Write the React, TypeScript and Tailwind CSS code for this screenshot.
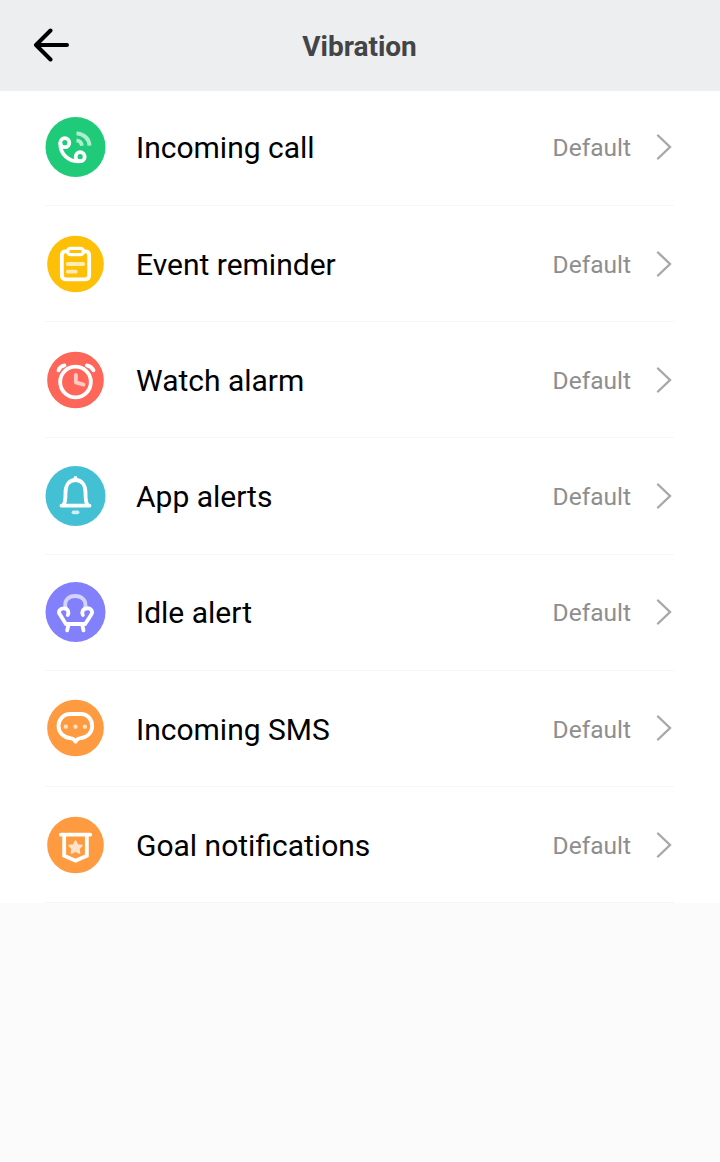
import React from 'react';

interface VibrationItem {
  label: string;
  value: string;
  color: string;
  radius: number;
  icon: React.ReactNode;
}

const items: VibrationItem[] = [
  {
    label: 'Incoming call',
    value: 'Default',
    color: '#1fcb79',
    radius: 90,
    icon: (
      <>
        <circle cx="58" cy="77" r="13.5" />
        <circle cx="104" cy="119" r="13.5" />
        <path d="M44.5 79C43 111 70 135 103 132.5" />
        <path d="M93 70c9 1 15 7 16 16M93 49c22 1 38 16 39 37" opacity="0.65" strokeLinecap="butt" />
      </>
    ),
  },
  {
    label: 'Event reminder',
    value: 'Default',
    color: '#fdc006',
    radius: 85,
    icon: (
      <>
        <path d="M66 52H61Q49 52 49 64V124Q49 136 61 136H119Q131 136 131 124V64Q131 52 119 52H114" />
        <rect x="66" y="43" width="48" height="19" rx="9.5" strokeWidth="10" />
        <path d="M67 90H113M67 113H91" opacity="0.7" />
      </>
    ),
  },
  {
    label: 'Watch alarm',
    value: 'Default',
    color: '#fd6659',
    radius: 85,
    icon: (
      <>
        <circle cx="90" cy="96" r="46" />
        <path d="M39 61Q43 49 57 46M124 46Q138 49 144 61" />
        <path d="M91 75V97L114 104" opacity="0.65" />
      </>
    ),
  },
  {
    label: 'App alerts',
    value: 'Default',
    color: '#43c0d4',
    radius: 90,
    icon: (
      <>
        <path d="M55 116C60 106 60 96 60 80C60 56 72 42 90 42S120 56 120 80C120 96 120 106 125 116" />
        <path d="M48 119H132" />
        <path d="M90 36V40" />
        <path d="M84 139H96" opacity="0.75" />
      </>
    ),
  },
  {
    label: 'Idle alert',
    value: 'Default',
    color: '#8280fb',
    radius: 90,
    icon: (
      <>
        <path d="M60 77C55 53 71 42 89 42S124 53 119 77" opacity="0.65" />
        <path d="M67 99C71 91 68 80 56 79C43 78 37 89 43 97L61 126H119L137 98C144 88 136 77 124 79C111 80 108 91 112 99" />
        <path d="M69 128L65 145M110 128L114 145" />
      </>
    ),
  },
  {
    label: 'Incoming SMS',
    value: 'Default',
    color: '#fe9b40',
    radius: 85,
    icon: (
      <>
        <path d="M74 48H106C127 48 140 65 140 84C140 103 126 119 103 121Q96 121 90 131Q84 121 77 121C54 119 39 103 39 84C39 65 53 48 74 48Z" />
        <path d="M61 86H61.1M90 86H90.1M118 86H118.1" strokeWidth="13" opacity="0.7" />
      </>
    ),
  },
  {
    label: 'Goal notifications',
    value: 'Default',
    color: '#fe9b40',
    radius: 85,
    icon: (
      <>
        <path d="M46 59H134" />
        <path d="M56 60V122L90 137L124 122V60" strokeLinejoin="miter" />
        <path
          d="M90 78L96 90L109 92L100 101L102 114L90 108L78 114L80 101L71 92L84 90Z"
          fill="#fff"
          strokeWidth="5"
          opacity="0.72"
        />
      </>
    ),
  },
];

const ItemIcon: React.FC<{ item: VibrationItem }> = ({ item }) => (
  <svg
    viewBox="-1.5 0 180 180"
    className="h-[60px] w-[60px] shrink-0 overflow-visible"
    fill="none"
    stroke="#fff"
    strokeWidth="11.5"
    strokeLinecap="round"
    strokeLinejoin="round"
  >
    <circle cx="90" cy="90" r={item.radius} fill={item.color} stroke="none" />
    {item.icon}
  </svg>
);

export default function App() {
  return (
    <div className="min-h-screen bg-[#fbfbfb] font-['Roboto',sans-serif]">
      {/* Header */}
      <header className="grid h-[91px] grid-cols-[1fr_auto_1fr] items-center bg-[#edeef0] pr-[34px] pl-[33px]">
        <button aria-label="Back" className="w-9">
          <svg viewBox="0 0 36 36" className="h-9 w-9" fill="none" stroke="#000" strokeWidth="4" strokeLinecap="round" strokeLinejoin="round">
            <path d="M34 17H3M17.5 2.5L3 17L17.5 31.5" />
          </svg>
        </button>
        <h1 className="pt-[2px] text-[28px] leading-8 font-bold text-[#434447]">Vibration</h1>
      </header>

      {/* Vibration settings */}
      <ul className="bg-white pr-[46px] pl-[45px]">
        {items.map((item) => (
          <li
            key={item.label}
            className="flex h-[116.2px] items-center border-b border-[#f6f6f6] first:h-[115px] first:pb-[2px]"
          >
            <ItemIcon item={item} />
            <span className="ml-[31px] flex-1 pt-[2.4px] text-[30px] leading-9 text-black">{item.label}</span>
            <span className="pt-[2.4px] text-[24.5px] leading-8 text-[#8e8e8e]">{item.value}</span>
            <svg viewBox="0 0 16 26" className="mr-[2px] ml-[25px] h-[26px] w-4" fill="none" stroke="#a8a8a8" strokeWidth="2.4" strokeLinecap="round">
              <path d="M2 1.5L14 13L2 24.5" />
            </svg>
          </li>
        ))}
      </ul>
    </div>
  );
}
